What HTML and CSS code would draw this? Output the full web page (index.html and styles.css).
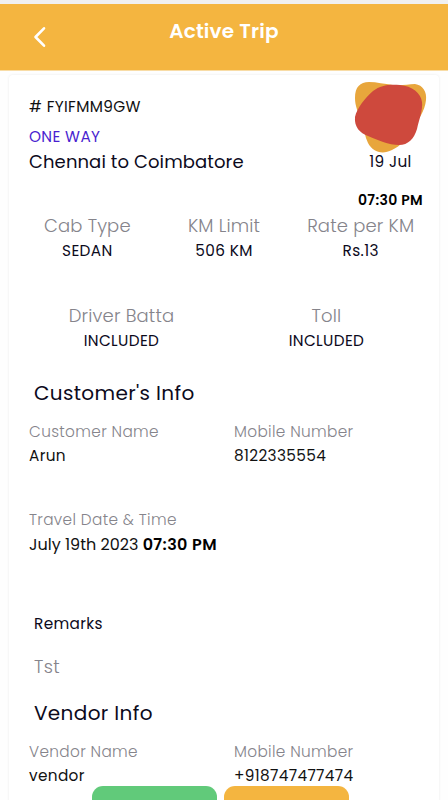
FILE: index.html
```html
<!DOCTYPE html>
<html lang="en">
<head>
    <meta charset="UTF-8">
    <meta name="viewport" content="width=device-width, initial-scale=1">
    <title>Active Trip</title>
    <link rel="stylesheet" href="styles.css">
</head>
<body>
    <header class="header">
        <svg class="back" width="14" height="24" viewBox="0 0 14 24">
            <path d="M12 3.3L3.5 12l8.5 8.7" fill="none" stroke="#fff" stroke-width="2.6" stroke-linecap="round" stroke-linejoin="round"/>
        </svg>
        <h1 class="title">Active Trip</h1>
    </header>

    <main class="card">
        <div class="summary">
            <div class="route">
                <div class="trip-id"># FYIFMM9GW</div>
                <div class="trip-type">ONE WAY</div>
                <div class="places">Chennai to Coimbatore</div>
            </div>
            <div class="schedule">
                <svg class="blob" width="74" height="74" viewBox="0 0 74 74">
                    <path d="M1 17C1 6 6 1 15 1c8 0 15 2 24 3 9 1 15-1 22-1 8 1 12 8 11 16-1 11-8 20-14 30-6 9-11 16-20 20-10 5-19 2-24-7-3-6-4-14-7-23C4 31 1 25 1 17Z" fill="#e8a63c"/>
                    <path d="M1 36C3 27 11 17 19 10 27 4 35 3 46 4c12 1 21 8 22 17 1 8-3 18-5 27-3 10-9 16-18 16-10 0-22-5-31-9C6 52 0 46 1 36Z" fill="#ce493d"/>
                </svg>
                <div class="date">19 Jul</div>
                <div class="time">07:30 PM</div>
            </div>
        </div>

        <div class="row">
            <div class="stat"><span class="stat-label">Cab Type</span><span class="stat-value">SEDAN</span></div>
            <div class="stat"><span class="stat-label">KM Limit</span><span class="stat-value">506 KM</span></div>
            <div class="stat"><span class="stat-label">Rate per KM</span><span class="stat-value">Rs.13</span></div>
        </div>
        <div class="row">
            <div class="stat"><span class="stat-label">Driver Batta</span><span class="stat-value">INCLUDED</span></div>
            <div class="stat"><span class="stat-label">Toll</span><span class="stat-value">INCLUDED</span></div>
        </div>

        <h2 class="section-title">Customer's Info</h2>
        <div class="row info-row">
            <div class="info"><span class="label">Customer Name</span><span class="value">Arun</span></div>
            <div class="info"><span class="label">Mobile Number</span><span class="value">8122335554</span></div>
        </div>
        <div class="row travel-row">
            <div class="info"><span class="label">Travel Date &amp; Time</span><span class="value travel">July 19th 2023 <b>07:30 PM</b></span></div>
        </div>

        <h3 class="remarks-title">Remarks</h3>
        <p class="remarks">Tst</p>

        <h2 class="section-title">Vendor Info</h2>
        <div class="row">
            <div class="info"><span class="label">Vendor Name</span><span class="value">vendor</span></div>
            <div class="info"><span class="label">Mobile Number</span><span class="value">+918747477474</span></div>
        </div>
    </main>

    <div class="actions">
        <div class="action start"></div>
        <div class="action cancel"></div>
    </div>
</body>
</html>
```
FILE: styles.css
```css
* {
    box-sizing: border-box;
}
body {
    margin: 0;
    height: 800px;
    overflow: hidden;
    position: relative;
    background: #fefefe;
    color: #0c0a1c;
    font-family: Poppins, Inter, sans-serif;
    font-size: 15.3px;
    letter-spacing: 0.35px;
}
h1, h2, h3, p {
    margin: 0;
}
.header {
    display: grid;
    grid-template-columns: 50px 1fr 50px;
    height: 71px;
    padding-top: 12px;
    border-top: 4px solid #f0f0f0;
    border-bottom: 1px solid #f8dca6;
    background: #f4b540;
}
.back {
    margin: 9px 0 0 32px;
}
.title {
    color: #fff;
    font-size: 20px;
    font-weight: 600;
    line-height: 30px;
    letter-spacing: 0.2px;
    text-align: center;
}
.card {
    width: 430px;
    height: 760px;
    margin: 4px 9px 0;
    padding: 0 10px;
    background: #fff;
    border-radius: 4px;
    box-shadow: 0 0 3px rgba(0, 0, 0, 0.08);
}
.summary {
    display: flex;
    justify-content: space-between;
    height: 139px;
    padding: 6px 0 0 10px;
}
.trip-id {
    margin-top: 14px;
    line-height: 23px;
    color: #111;
}
.trip-type {
    margin-top: 8px;
    line-height: 22px;
    color: #4a1fd0;
}
.places {
    margin-top: 1px;
    font-size: 18px;
    line-height: 25px;
    letter-spacing: 0.1px;
}
.schedule {
    display: flex;
    flex-direction: column;
    align-items: center;
    width: 75px;
    margin-right: 1px;
}
.blob {
    flex: none;
}
.date {
    line-height: 14px;
}
.time {
    margin-top: 20px;
    font-size: 14px;
    font-weight: 600;
    line-height: 22px;
    white-space: nowrap;
    color: #000;
}
.row {
    display: flex;
    height: 90px;
}
.stat, .info {
    display: flex;
    flex: 1;
    flex-direction: column;
}
.stat {
    align-items: center;
}
.info {
    padding-left: 10px;
}
.stat-label {
    color: #85848b;
    font-size: 18px;
    font-weight: 300;
    line-height: 24px;
    letter-spacing: 0.15px;
}
.stat-value {
    line-height: 26px;
}
.section-title {
    padding-left: 15px;
    font-size: 20px;
    font-weight: 400;
    line-height: 30px;
}
.row + .section-title {
    margin-top: -16px;
}
.row:last-child, .info-row {
    margin-top: 11px;
}
.info-row {
    height: 88px;
}
.label {
    color: #85848b;
    font-weight: 300;
    line-height: 25px;
}
.value {
    line-height: 24px;
    color: #111;
}
.travel {
    font-size: 16px;
    line-height: 26px;
    letter-spacing: 0;
}
.travel b {
    font-weight: 600;
    letter-spacing: 0.4px;
    color: #000;
}
.travel-row {
    height: 104px;
}
.remarks-title {
    padding-left: 15px;
    font-size: 15.3px;
    font-weight: 400;
    line-height: 25px;
}
.remarks {
    margin: 19px 0;
    padding-left: 15px;
    color: #85848b;
    font-size: 18px;
    font-weight: 300;
    line-height: 24px;
}
/* buttons pinned over the bottom of the card */
.actions {
    position: absolute;
    top: 786px;
    left: 92px;
    display: flex;
    gap: 7px;
}
.action {
    width: 125px;
    height: 40px;
    border-radius: 11px;
}
.start {
    background: #61ca7a;
}
.cancel {
    background: #f4b540;
}
```
